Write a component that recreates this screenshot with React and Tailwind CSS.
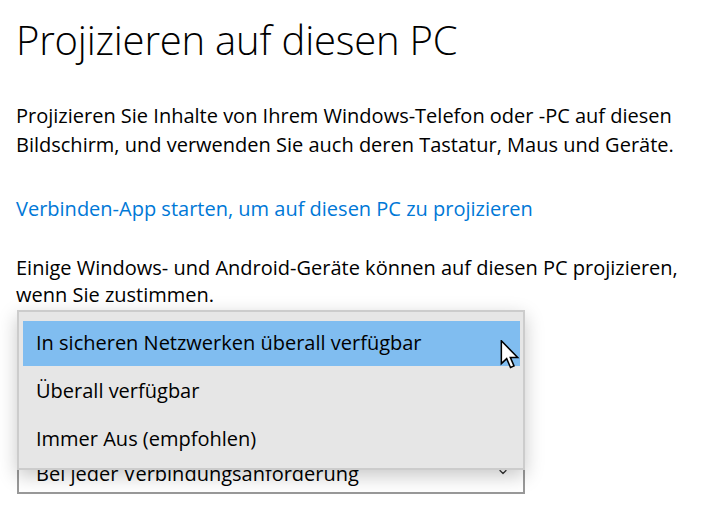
import { ChevronDown } from 'lucide-react';

const font = { fontFamily: '"Open Sans", "Noto Sans", sans-serif' };

function Cursor() {
    return (
        <svg width="21" height="29" viewBox="0 0 13 19" className="absolute left-[500px] top-[340px]">
            <path
                d="M0.5 0.5 L0.5 15.5 L4 12.2 L6.5 18 L8.8 17 L6.4 11.4 L11.2 11.4 Z"
                fill="#fff"
                stroke="#000"
                strokeWidth="1"
                strokeLinejoin="miter"
            />
        </svg>
    );
}

export default function App() {
    const options = [
        'In sicheren Netzwerken überall verfügbar',
        'Überall verfügbar',
        'Immer Aus (empfohlen)',
    ];

    return (
        <div className="w-[705px] h-[510px] bg-white overflow-hidden relative text-black" style={font}>
            <main className="pl-4 pr-1">
                {/* Header */}
                <h1 className="pt-[14px] text-[40px] leading-[52px] font-light tracking-[-0.2px]">
                    Projizieren auf diesen PC
                </h1>

                <p className="mt-[35px] text-[20px] leading-[29px]">
                    Projizieren Sie Inhalte von Ihrem Windows-Telefon oder -PC auf diesen
                    <br />
                    Bildschirm, und verwenden Sie auch deren Tastatur, Maus und Geräte.
                </p>

                <p className="mt-[35px] text-[20px] leading-[29px] text-[#0078d7]">
                    Verbinden-App starten, um auf diesen PC zu projizieren
                </p>

                <p className="mt-[31px] text-[20px] leading-[27px] whitespace-nowrap">
                    Einige Windows- und Android-Geräte können auf diesen PC projizieren,
                    <br />
                    wenn Sie zustimmen.
                </p>

                {/* Second setting, mostly covered by the open list */}
                <div className="w-[508px] ml-[1px] mt-[142px] h-[44px] border-2 border-[#999] flex items-center justify-between pl-[17px] pr-[14px] text-[20px]">
                    <span className="translate-y-[2px]">Bei jeder Verbindungsanforderung</span>
                    <ChevronDown size={12} strokeWidth={2.5} className="text-[#333]" />
                </div>
            </main>

            {/* Open dropdown list */}
            <div className="absolute left-[17px] top-[310px] w-[508px] h-[160px] bg-[#e6e6e6] border-2 border-[#ccc] pt-[7px] px-[2px] shadow-[0_6px_18px_rgba(0,0,0,0.22)]">
                {options.map((o, i) => (
                    <div key={o} className="h-12 flex flex-col justify-center">
                        <div
                            className={
                                'h-[45px] flex items-center text-[20px] ' +
                                (i === 0 ? 'bg-[#80bdf0] ml-[2px] mr-[1px] pl-[13px]' : 'pl-[15px]')
                            }
                        >
                            {o}
                        </div>
                    </div>
                ))}
            </div>

            <Cursor />
        </div>
    );
}
